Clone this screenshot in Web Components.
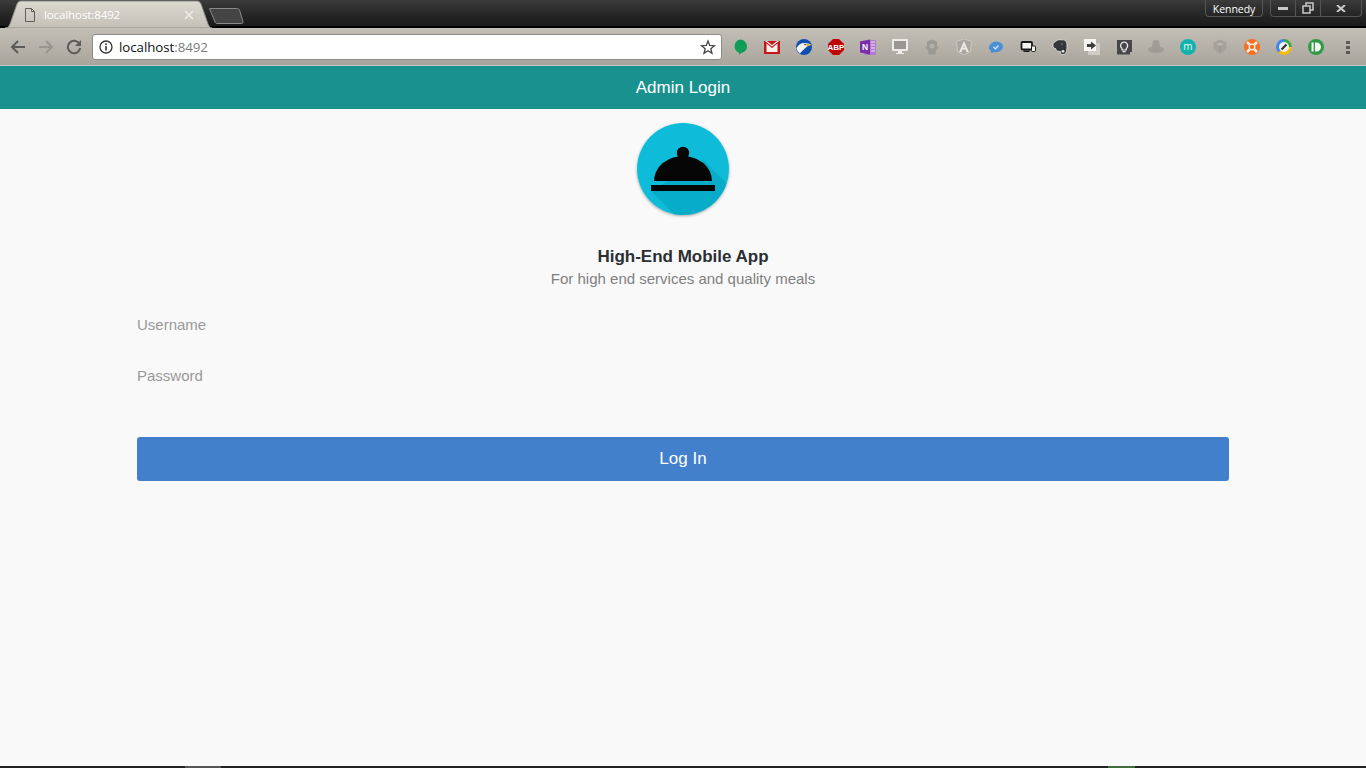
<!DOCTYPE html>
<html lang="en">
<head>
<meta charset="utf-8">
<title>Admin Login</title>
<style>
  html, body { margin: 0; height: 100%; overflow: hidden; }
  body { display: flex; flex-direction: column; background: #f9f9f9; font-family: "Liberation Sans", Arial, sans-serif; }
</style>
</head>
<body>
  <title-strip user="Kennedy" tab-title="localhost:8492"></title-strip>
  <tool-bar host-name="localhost" port=":8492"></tool-bar>
  <app-header>Admin Login</app-header>
  <login-page>
    <brand-logo></brand-logo>
    <span slot="title">High-End Mobile App</span>
    <span slot="subtitle">For high end services and quality meals</span>
    <text-field>Username</text-field>
    <text-field type="password">Password</text-field>
    <action-button>Log In</action-button>
  </login-page>
  <task-strip></task-strip>

<script>
class TitleStrip extends HTMLElement {
  constructor() {
    super();
    this.shadowDOM = this.attachShadow({ mode: 'open' });
  }

  connectedCallback() {
    this.shadowDOM.innerHTML = `
      <style>
        :host {
          display: flex;
          justify-content: space-between;
          height: 28px;
          flex: none;
          background: linear-gradient(#3b3b3b, #232323 60%, #1b1b1b 92%, #000 93%);
          font-family: "Open Sans", sans-serif;
        }
        .tabs { display: flex; }
        .tab {
          position: relative;
          width: 212px;
          height: 28px;
          color: #fff;
          font-size: 11.5px;
        }
        .tab svg { position: absolute; left: 0; top: 0; }
        .tab span { position: absolute; left: 44px; top: 7px; line-height: 16px; letter-spacing: -.1px; }
        .newtab { margin: 7px 0 0 -4px; }
        .right { display: flex; gap: 7px; padding-right: 4px; align-items: flex-start; }
        .user {
          width: 58px;
          height: 17px;
          box-sizing: border-box;
          border: 1px solid #555;
          border-top: 0;
          border-radius: 0 0 4px 4px;
          color: #fff;
          font-size: 10.5px;
          line-height: 18px;
          letter-spacing: -.05px;
          text-align: center;
        }
        .caption {
          display: flex;
          height: 17px;
          box-sizing: border-box;
          border: 1px solid #555;
          border-top: 0;
          border-radius: 0 0 4px 4px;
        }
        .caption div { display: flex; align-items: center; justify-content: center; border-right: 1px solid #555; box-sizing: border-box; }
        .caption div:last-child { border-right: 0; }
      </style>
      <div class="tabs">
        <div class="tab">
          <svg width="212" height="28" viewBox="0 0 212 28">
            <defs>
              <linearGradient id="tabfill" x1="0" y1="0" x2="0" y2="1">
                <stop offset="0" stop-color="#dcd9d1"/>
                <stop offset="1" stop-color="#c4c0b7"/>
              </linearGradient>
            </defs>
            <path d="M5 28 C8 28 9 26 10 24 L17 4 C18 2 19 1 21 1 L197 1 C199 1 200 2 201 4 L208 24 C209 26 210 28 212 28 Z" fill="url(#tabfill)" stroke="#8b8b87" stroke-width="1"/>
            <path d="M25.500 8.500 H31.500 L34.500 11.500 V21.500 H25.500 Z M31.500 8.500 V11.500 H34.500" fill="none" stroke="#5f5f5c"/>
            <path d="M185 11 L193 19 M193 11 L185 19" stroke="#eeece7" stroke-width="1.600"/>
          </svg>
          <span>${this.getAttribute('tab-title')}</span>
        </div>
        <svg class="newtab" width="36" height="18" viewBox="0 0 36 18">
          <path d="M1.500 1.500 H29 C30 1.500 31 2 31.500 3 L35 14.500 C35.300 16 34.500 16.500 33.500 16.500 H9 C8 16.500 7.500 16 7 15 Z" fill="#454545" stroke="#8a8a8a"/>
        </svg>
      </div>
      <div class="right">
        <div class="user">${this.getAttribute('user')}</div>
        <div class="caption">
          <div style="width:25px"><svg width="10" height="3"><rect width="10" height="3" fill="#c9c9c9"/></svg></div>
          <div style="width:25px"><svg width="12" height="12" viewBox="0 0 12 12" fill="none" stroke="#c9c9c9" stroke-width="1.500"><rect x="1" y="4" width="7" height="7"/><path d="M4 4 V1 H11 V8 H8"/></svg></div>
          <div style="width:40px"><svg width="10" height="7" viewBox="0 0 10 7" fill="none" stroke="#c9c9c9" stroke-width="2"><path d="M1 0 L9 7 M9 0 L1 7"/></svg></div>
        </div>
      </div>`;
  }
}

// one entry per extension, 16x16 box, in toolbar order
const EXTENSIONS = [
  '<path d="M8 .5a7 7 0 0 1 7 7c0 3.800-3 6-6 6.500l-2 2v-2.200A7 7 0 0 1 8 .5z" fill="#0f9d58"/>',
  '<rect x="0" y="2" width="16" height="13" fill="#c5161c"/><path d="M2.500 4.500 L8 9 L13.500 4.500 V13 H2.500Z" fill="#f4f1ec"/><path d="M1 2 L8 7.500 L15 2Z" fill="#f4f1ec"/><path d="M3 2 L8 6 L13 2Z" fill="#c5161c"/>',
  '<circle cx="8" cy="8" r="8" fill="#0f4fb3"/><path d="M.5 9 C3 4 8 2.500 15 5.500 L11 7.500 C9 9 6 12 4 14.500 C2 13 1 11 .5 9Z" fill="#f4f2ee"/><path d="M10 4.500 L15.500 6 L11 7.500Z" fill="#e8a91e"/><circle cx="9" cy="5.500" r=".8" fill="#222"/>',
  '<path d="M5 0 H11 L16 5 V11 L11 16 H5 L0 11 V5 Z" fill="#c00000"/><text x="8" y="11" text-anchor="middle" font-family="Liberation Sans, sans-serif" font-size="8" font-weight="700" fill="#fff">ABP</text>',
  '<rect x="5" y="1" width="11" height="15" fill="#b27ad0"/><path d="M11 3H15M11 6H15M11 9H15M11 12H15" stroke="#f1e6f5"/><path d="M0 2.500 L10 .5 V15.500 L0 13.500Z" fill="#7a2fa8"/><text x="5" y="11" text-anchor="middle" font-family="Liberation Sans, sans-serif" font-size="8.500" font-weight="700" fill="#fff">N</text>',
  '<rect x="0" y="0" width="16" height="12" rx="1" fill="#eeece8"/><rect x="2" y="2" width="12" height="8" fill="#9a9791"/><path d="M6 12h4v2h2v1H4v-1h2z" fill="#eeece8"/>',
  '<path d="M8 .5 L13 2.500 V7 L15 9 L13 10 L11 15.500 H5 L3 10 L1 9 L3 7 V2.500Z" fill="#9c9a95"/><circle cx="8" cy="7" r="2.500" fill="#b3b0a9"/>',
  '<path d="M8 0 L15.500 2.500 L14.500 12.500 L8 16 L1.500 12.500 L.5 2.500Z" fill="#a9a69f" stroke="#d2d0cb" stroke-width=".8"/><path d="M8 2 L12.800 13 H10.500 L9.600 10.600 H6.400 L5.500 13 H3.200Z M7.200 8.800 H8.800 L8 6.600Z" fill="#eeece8" fill-rule="evenodd"/>',
  '<path d="M8 2.500 C12.500 2.500 15.500 5 15 8 C14.500 11 11 13.500 8 13 L3 14 L3 11.800 C1 10.500 .5 9 1 7.500 C2 4.500 5 2.500 8 2.500Z" fill="#4a90d6"/><path d="M5.500 8 L7.500 9.800 L10.500 6.500" fill="none" stroke="#dfe9f2" stroke-width="1.200"/>',
  '<rect x="1.500" y="3" width="10.500" height="7.500" rx="1" fill="#f5f3ef" stroke="#1a1a1a" stroke-width="1.800"/><rect x="11.500" y="7" width="4" height="5.500" rx="1" fill="#f5f3ef" stroke="#1a1a1a"/><rect x="3.500" y="11.500" width="6" height="1.500" fill="#1a1a1a"/>',
  '<path d="M3.500 2.500 L6 .8 H10.500 C14 .8 15 3.500 15 7 C15 12 14 15.500 11 15.500 C9 15.500 8 14.500 8.500 12.500 C6 12.500 4 12 3.500 9.500 C2 9.500 1 8.500 1 7 V4.500 Z" fill="#33363a" stroke="#e9e7e3" stroke-width=".8"/><circle cx="11" cy="12.300" r="1.400" fill="#e9e7e3"/><circle cx="10" cy="5" r=".8" fill="#8a8a88"/>',
  '<rect x="4" y="4" width="12" height="12" fill="#cfccc6"/><rect x="0" y="0" width="12" height="12" fill="#f7f5f1"/><path d="M3 5 H7 V2.500 L12 6.500 L7 10.500 V8 H3Z" fill="#3d3d3d"/>',
  '<path d="M1 1 H16 V13 H14 V15.500 H1Z" fill="#47464a"/><path d="M8 3 A3.700 3.700 0 0 1 10.200 9.600 V11 H6 V9.600 A3.700 3.700 0 0 1 8 3Z" fill="none" stroke="#f2f0ec" stroke-width="1.200"/><path d="M6.500 12.700 H9.700" stroke="#f2f0ec" stroke-width="1.200"/>',
  '<path d="M5 2 C6 1 10 1 11 2 L12 8 C14.500 8.500 16 9.500 16 10.500 C16 12.500 12 14 8 14 C4 14 0 12.500 0 10.500 C0 9.500 1.500 8.500 4 8 Z" fill="#9f9c96"/>',
  '<circle cx="8" cy="8" r="8" fill="#13b3ad"/><text x="8" y="11" text-anchor="middle" font-family="Open Sans, sans-serif" font-size="10" fill="#e9f7f6">m</text>',
  '<path d="M8 .5 L14.500 3.500 V10 L8 15.500 L1.500 10 V3.500Z" fill="#a5a29c"/><path d="M8 3.500 L11.500 5 L8 7 L4.500 5Z" fill="#bab7b1"/><path d="M8 7 V13" stroke="#95928c"/>',
  '<circle cx="8" cy="8" r="8" fill="#f36f21"/><circle cx="8" cy="8" r="2.800" fill="none" stroke="#f6efe9" stroke-width="1.300"/><path d="M3 3 L5.500 5.500 M13 3 L10.500 5.500 M3 13 L5.500 10.500 M13 13 L10.500 10.500" stroke="#f6efe9" stroke-width="2.600"/>',
  '<circle cx="8" cy="8" r="7.900" fill="#fbbc05"/><path d="M8 8 L2.400 13.600 A7.900 7.900 0 0 1 8 .1 Z" fill="#4285f4"/><path d="M8 .1 A7.900 7.900 0 0 1 15.900 8 L8 8Z" fill="#34a853"/><circle cx="8" cy="8" r="5" fill="#f4f2ee"/><path d="M5.500 10.500 L10.500 5.500" stroke="#333" stroke-width="2.200"/>',
  '<circle cx="8" cy="8" r="8" fill="#2e9a47"/><rect x="3.500" y="3.500" width="2.200" height="9" fill="#f3f5ef"/><path d="M7 3.500 H8.500 A4.500 4.500 0 0 1 8.500 12.500 H7Z" fill="#f3f5ef"/>'
];

class ToolBar extends HTMLElement {
  constructor() {
    super();
    this.shadowDOM = this.attachShadow({ mode: 'open' });
  }

  connectedCallback() {
    const extensions = EXTENSIONS
      .map((icon) => `<svg width="16" height="16" viewBox="0 0 16 16">${icon}</svg>`)
      .join('');
    this.shadowDOM.innerHTML = `
      <style>
        :host {
          display: flex;
          align-items: center;
          flex: none;
          height: 38px;
          box-sizing: border-box;
          padding: 1px 0 0 10px;
          background: linear-gradient(#c3bfb6, #a9a59c);
          border-bottom: 1px solid #c6cbc4;
        }
        .nav { display: flex; gap: 12px; width: 82px; }
        .omni {
          display: flex;
          align-items: center;
          width: 630px;
          height: 26px;
          box-sizing: border-box;
          padding: 0 5px 0 6px;
          background: #fff;
          border: 1px solid #8d8b85;
          border-radius: 3px;
          font-family: "Open Sans", sans-serif;
          font-size: 13.300px;
          color: #111;
        }
        .omni .url { margin-left: 6px; flex: 1; letter-spacing: -.05px; }
        .omni .url span { color: #7b7b7b; }
        .ext { display: flex; gap: 16px; margin-left: 10px; }
        .menu { display: flex; flex-direction: column; gap: 2px; margin-left: 22px; }
        .menu i { display: block; width: 4px; height: 3px; background: #5d5b57; }
      </style>
      <div class="nav">
        <svg width="16" height="16" viewBox="0 0 16 16" fill="none" stroke="#5b5b59" stroke-width="2"><path d="M15 8 H2.500 M8 2 L2 8 L8 14"/></svg>
        <svg width="16" height="16" viewBox="0 0 16 16" fill="none" stroke="#989590" stroke-width="2"><path d="M1 8 H13.500 M8 2 L14 8 L8 14"/></svg>
        <svg width="16" height="16" viewBox="0 0 16 16" fill="none" stroke="#5b5b59" stroke-width="2"><path d="M13.500 5 A6.200 6.200 0 1 0 14.200 9"/><path d="M15 1 V7 H9 Z" fill="#5b5b59" stroke="none"/></svg>
      </div>
      <div class="omni">
        <svg width="14" height="14" viewBox="0 0 14 14"><circle cx="7" cy="7" r="6" fill="none" stroke="#333" stroke-width="1.300"/><rect x="6.200" y="6" width="1.600" height="4.500" fill="#333"/><rect x="6.200" y="3.300" width="1.600" height="1.600" fill="#333"/></svg>
        <div class="url">${this.getAttribute('host-name')}<span>${this.getAttribute('port')}</span></div>
        <svg width="16" height="16" viewBox="0 0 16 16"><path d="M8 2 L9.700 6.400 L14.500 6.700 L10.800 9.700 L12 14.300 L8 11.800 L4 14.300 L5.200 9.700 L1.500 6.700 L6.300 6.400Z" fill="none" stroke="#444" stroke-width="1.300"/></svg>
      </div>
      <div class="ext">${extensions}</div>
      <div class="menu"><i></i><i></i><i></i></div>`;
  }
}

class AppHeader extends HTMLElement {
  constructor() {
    super();
    this.shadowDOM = this.attachShadow({ mode: 'open' });
    this.shadowDOM.innerHTML = `
      <style>
        :host {
          display: flex;
          align-items: center;
          justify-content: center;
          flex: none;
          height: 43px;
          background: #19918f;
          color: #fff;
          font-size: 17px;
        }
      </style>
      <slot></slot>`;
  }
}

class BrandLogo extends HTMLElement {
  constructor() {
    super();
    this.shadowDOM = this.attachShadow({ mode: 'open' });
    this.shadowDOM.innerHTML = `
      <style>
        :host {
          display: block;
          width: 92px;
          height: 92px;
          border-radius: 50%;
          box-shadow: 0 1px 3px rgba(0, 0, 0, .35);
        }
        svg { display: block; }
      </style>
      <svg width="92" height="92" viewBox="0 0 92 92">
        <defs><clipPath id="disc"><circle cx="46" cy="46" r="46"/></clipPath></defs>
        <circle cx="46" cy="46" r="46" fill="#0ebcd9"/>
        <polygon points="66,37 106,77 106,98 44,98 14,68" fill="#07acc8" clip-path="url(#disc)"/>
        <circle cx="46" cy="30" r="6.200" fill="#050505"/>
        <path d="M17 58 A29 25 0 0 1 75 58 Z" fill="#050505"/>
        <rect x="14" y="62" width="64" height="6" fill="#050505"/>
      </svg>`;
  }
}

class TextField extends HTMLElement {
  constructor() {
    super();
    this.shadowDOM = this.attachShadow({ mode: 'open' });
  }

  connectedCallback() {
    this.shadowDOM.innerHTML = `
      <style>
        :host { display: grid; height: 51px; align-items: center; }
        label, input { grid-area: 1 / 1; }
        label { color: #999; font-size: 15px; }
        input {
          height: 100%;
          padding: 0;
          border: 0;
          outline: 0;
          background: transparent;
          font: inherit;
        }
      </style>
      <label><slot></slot></label>
      <input type="${this.getAttribute('type') || 'text'}">`;
    const input = this.shadowDOM.querySelector('input');
    const label = this.shadowDOM.querySelector('label');
    input.addEventListener('input', () => {
      label.style.visibility = input.value ? 'hidden' : 'visible';
    });
  }
}

class ActionButton extends HTMLElement {
  constructor() {
    super();
    this.shadowDOM = this.attachShadow({ mode: 'open' });
    this.shadowDOM.innerHTML = `
      <style>
        :host { display: block; }
        button {
          display: block;
          width: 100%;
          height: 44px;
          padding: 0;
          border: 0;
          border-radius: 3px;
          background: #4380cb;
          color: #fff;
          font: 17px "Liberation Sans", Arial, sans-serif;
          cursor: pointer;
        }
        button:hover { background: #3a72b8; }
      </style>
      <button type="button"><slot></slot></button>`;
  }
}

class LoginPage extends HTMLElement {
  constructor() {
    super();
    this.shadowDOM = this.attachShadow({ mode: 'open' });
    this.shadowDOM.innerHTML = `
      <style>
        :host {
          display: flex;
          flex-direction: column;
          flex: 1;
          min-height: 0;
          box-sizing: border-box;
          padding: 14px 137px 0;
        }
        .brand { display: flex; flex-direction: column; align-items: center; }
        .title { margin-top: 32px; color: #2b2f33; font-size: 17px; font-weight: 700; line-height: 20px; }
        .subtitle { margin-top: 2px; color: #808080; font-size: 15px; line-height: 20px; }
        .form { margin-top: 10px; }
        .submit { margin-top: 36px; }
      </style>
      <div class="brand">
        <slot name="logo"></slot>
        <div class="title"><slot name="title"></slot></div>
        <div class="subtitle"><slot name="subtitle"></slot></div>
      </div>
      <div class="form"><slot name="fields"></slot></div>
      <div class="submit"><slot name="submit"></slot></div>`;
  }

  connectedCallback() {
    this.querySelector('brand-logo').slot = 'logo';
    this.querySelectorAll('text-field').forEach((field) => { field.slot = 'fields'; });
    this.querySelector('action-button').slot = 'submit';
  }
}

class TaskStrip extends HTMLElement {
  constructor() {
    super();
    this.shadowDOM = this.attachShadow({ mode: 'open' });
    this.shadowDOM.innerHTML = `
      <style>
        :host { display: flex; flex: none; height: 2px; background: #222; padding-left: 185px; }
        .a { width: 36px; background: #555; }
        .b { width: 27px; margin-left: 887px; background: #3f6f3f; }
      </style>
      <div class="a"></div><div class="b"></div>`;
  }
}

customElements.define('title-strip', TitleStrip);
customElements.define('tool-bar', ToolBar);
customElements.define('app-header', AppHeader);
customElements.define('brand-logo', BrandLogo);
customElements.define('text-field', TextField);
customElements.define('action-button', ActionButton);
customElements.define('login-page', LoginPage);
customElements.define('task-strip', TaskStrip);
</script>
</body>
</html>
